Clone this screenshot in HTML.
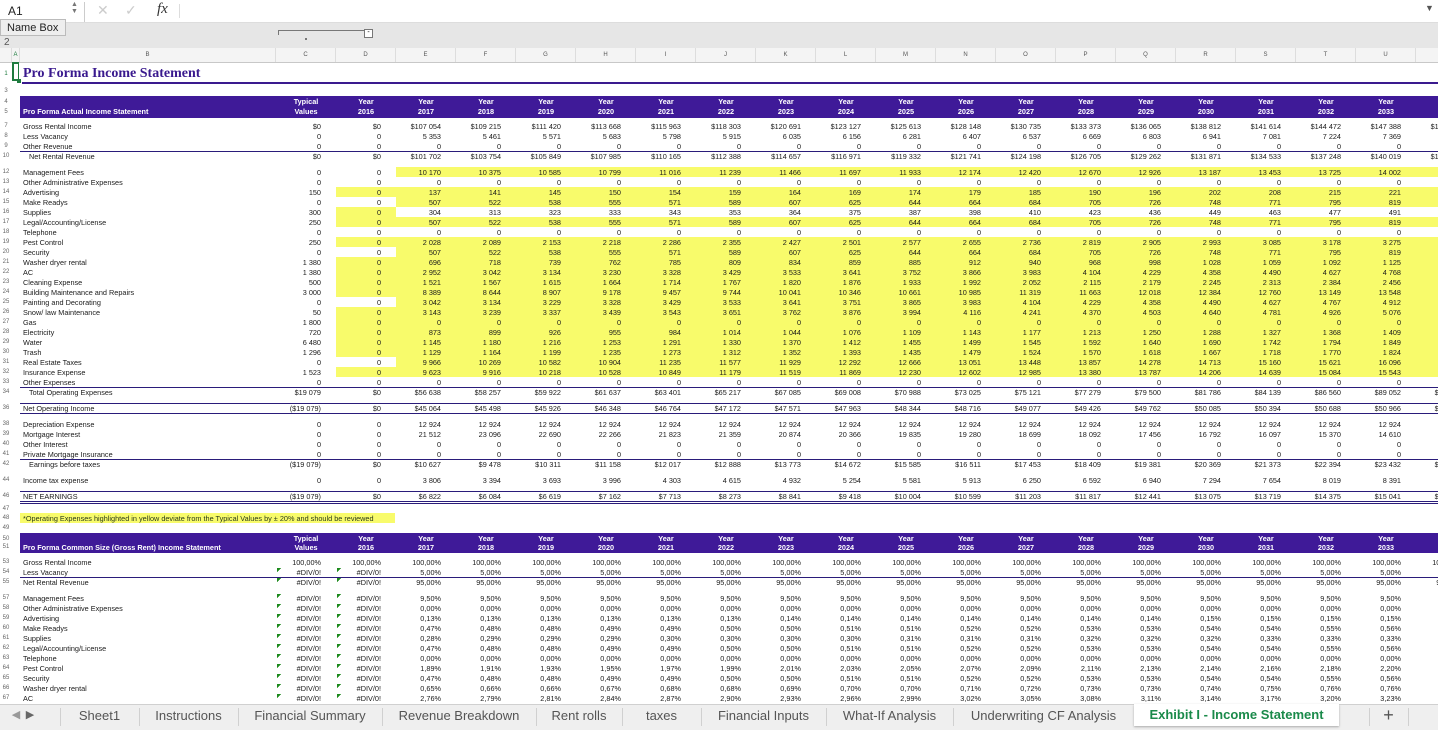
<!DOCTYPE html>
<html><head><meta charset="utf-8"><style>
body{margin:0;width:1438px;height:729px;overflow:hidden;position:relative;font-family:"Liberation Sans",Arial,sans-serif;background:#fff}
.r{position:absolute;left:0;height:10px;line-height:11px;white-space:nowrap;font-size:7.3px;color:#1a1a1a;width:1500px}
.r>*{display:inline-block;vertical-align:top;height:100%;overflow:hidden}
.n{width:12px;text-align:center;font-size:6px;color:#666}
.a{width:8px}
.l{width:256px;padding-left:3px;box-sizing:border-box}
.r i{font-style:normal;width:60px;text-align:right;padding-right:15px;box-sizing:border-box}
.ye i:nth-of-type(n+3){background:#f8fb6b}
.yd i:nth-of-type(2){background:#f8fb6b}
.g i:nth-of-type(1),.g i:nth-of-type(2){background:linear-gradient(135deg,#1d8a1d 3px,transparent 3px) no-repeat 1px 1px}
.pb .l,.pb i{background:#3f1a98;color:#fff;font-weight:bold}
.pb i{text-align:center;padding:0}
.ind{padding-left:9px!important}
.h{position:absolute;left:20px;width:1418px;height:1px;background:#2a1c7a}
.hd{position:absolute;top:48px;left:0;height:14px;width:1500px;background:#f4f4f4;border-bottom:1px solid #c8c8c8;white-space:nowrap;font-size:6px;color:#555;line-height:14px}
.hd span{display:inline-block;text-align:center;border-right:1px solid #ddd;box-sizing:border-box;height:14px;vertical-align:top}
.tabs{position:absolute;top:704px;left:0;width:1438px;height:25px;background:#efefef;border-top:1px solid #d0d0d0;font-size:13px;color:#555}
.tabs span{position:absolute;top:0;height:25px;line-height:21px;text-align:center}
.sep{position:absolute;top:3px;width:1px;height:18px;background:#d0d0d0}
</style></head><body>
<div style="position:absolute;top:0;left:0;width:1438px;height:22px;background:#fff;border-bottom:1px solid #ddd"></div>
<div style="position:absolute;top:4px;left:8px;font-size:12px;color:#222">A1</div>
<div style="position:absolute;top:1px;left:71px;font-size:7px;color:#777;line-height:7px">▲<br>▼</div>
<div style="position:absolute;top:2px;left:84px;width:1px;height:20px;background:#ccc"></div>
<div style="position:absolute;top:2px;left:97px;font-size:14px;color:#ccc">✕</div>
<div style="position:absolute;top:2px;left:125px;font-size:14px;color:#ccc">✓</div>
<div style="position:absolute;top:1px;left:157px;font-size:15px;font-family:'Liberation Serif',serif;font-style:italic;color:#333">fx</div>
<div style="position:absolute;top:4px;left:179px;width:1px;height:14px;background:#ddd"></div>
<div style="position:absolute;top:3px;left:1425px;font-size:9px;color:#555">▼</div>
<div style="position:absolute;top:23px;left:0;width:1438px;height:25px;background:#e6e6e6"></div>
<div style="position:absolute;top:30px;left:278px;width:86px;height:4px;border-top:1px solid #777;border-left:1px solid #777"></div>
<div style="position:absolute;top:29px;left:364px;width:7px;height:7px;border:1px solid #777;background:#fff;font-size:7px;line-height:6px;text-align:center">-</div>
<div style="position:absolute;top:38px;left:305px;width:2px;height:2px;background:#777"></div>
<div style="position:absolute;top:37px;left:4px;font-size:10px;color:#555">2</div>
<div style="position:absolute;top:19px;left:0;height:17px;background:#eee;border:1px solid #bbb;font-size:11px;line-height:17px;padding-left:6px;box-sizing:border-box;width:66px;color:#222">Name Box</div>
<div class="hd"><span style="width:12px"></span><span style="width:8px;color:#1e7b3e">A</span><span style="width:256px">B</span><span style="width:60px">C</span><span style="width:60px">D</span><span style="width:60px">E</span><span style="width:60px">F</span><span style="width:60px">G</span><span style="width:60px">H</span><span style="width:60px">I</span><span style="width:60px">J</span><span style="width:60px">K</span><span style="width:60px">L</span><span style="width:60px">M</span><span style="width:60px">N</span><span style="width:60px">O</span><span style="width:60px">P</span><span style="width:60px">Q</span><span style="width:60px">R</span><span style="width:60px">S</span><span style="width:60px">T</span><span style="width:60px">U</span><span style="width:60px">V</span></div>

<div class="r" style="top:62px;height:18px;line-height:24px"><span class="n" style="color:#1e7b3e">1</span><span class="a"></span><span class="l" style="font-family:'Liberation Serif',serif;font-weight:bold;font-size:14px;color:#3a1a8e;overflow:visible">Pro Forma Income Statement</span></div>
<div style="position:absolute;top:62px;left:12px;width:7px;height:19px;border:2px solid #1e7b3e;border-right-width:1px;box-sizing:border-box"></div>
<div style="position:absolute;top:79px;left:17px;width:4px;height:4px;background:#1e7b3e"></div>
<div style="position:absolute;top:82px;left:22px;width:1416px;height:2px;background:#3a1a8e"></div>
<div class="r" style="top:86px"><span class="n">3</span></div>
<div class="r pb" style="top:96px;height:11px;line-height:12px"><span class="n">4</span><span class="a"></span><span class="l"></span><i>Typical</i><i>Year</i><i>Year</i><i>Year</i><i>Year</i><i>Year</i><i>Year</i><i>Year</i><i>Year</i><i>Year</i><i>Year</i><i>Year</i><i>Year</i><i>Year</i><i>Year</i><i>Year</i><i>Year</i><i>Year</i><i>Year</i><i>Year</i></div>
<div class="r pb" style="top:107px;height:11px;line-height:10px"><span class="n">5</span><span class="a"></span><span class="l">Pro Forma Actual Income Statement</span><i>Values</i><i>2016</i><i>2017</i><i>2018</i><i>2019</i><i>2020</i><i>2021</i><i>2022</i><i>2023</i><i>2024</i><i>2025</i><i>2026</i><i>2027</i><i>2028</i><i>2029</i><i>2030</i><i>2031</i><i>2032</i><i>2033</i><i>2034</i></div>
<div class="r" style="top:121px"><span class="n">7</span><span class="a"></span><span class="l">Gross Rental Income</span><i>$0</i><i>$0</i><i>$107 054</i><i>$109 215</i><i>$111 420</i><i>$113 668</i><i>$115 963</i><i>$118 303</i><i>$120 691</i><i>$123 127</i><i>$125 613</i><i>$128 148</i><i>$130 735</i><i>$133 373</i><i>$136 065</i><i>$138 812</i><i>$141 614</i><i>$144 472</i><i>$147 388</i><i>$150 363</i></div>
<div class="r" style="top:131px"><span class="n">8</span><span class="a"></span><span class="l">Less Vacancy</span><i>0</i><i>0</i><i>5 353</i><i>5 461</i><i>5 571</i><i>5 683</i><i>5 798</i><i>5 915</i><i>6 035</i><i>6 156</i><i>6 281</i><i>6 407</i><i>6 537</i><i>6 669</i><i>6 803</i><i>6 941</i><i>7 081</i><i>7 224</i><i>7 369</i><i>7 518</i></div>
<div class="r" style="top:141px"><span class="n">9</span><span class="a"></span><span class="l">Other Revenue</span><i>0</i><i>0</i><i>0</i><i>0</i><i>0</i><i>0</i><i>0</i><i>0</i><i>0</i><i>0</i><i>0</i><i>0</i><i>0</i><i>0</i><i>0</i><i>0</i><i>0</i><i>0</i><i>0</i><i>0</i></div>
<div class="h" style="top:151px"></div>
<div class="r" style="top:151px"><span class="n">10</span><span class="a"></span><span class="l ind">Net Rental Revenue</span><i>$0</i><i>$0</i><i>$101 702</i><i>$103 754</i><i>$105 849</i><i>$107 985</i><i>$110 165</i><i>$112 388</i><i>$114 657</i><i>$116 971</i><i>$119 332</i><i>$121 741</i><i>$124 198</i><i>$126 705</i><i>$129 262</i><i>$131 871</i><i>$134 533</i><i>$137 248</i><i>$140 019</i><i>$142 845</i></div>
<div class="r ye" style="top:167px"><span class="n">12</span><span class="a"></span><span class="l">Management Fees</span><i>0</i><i>0</i><i>10 170</i><i>10 375</i><i>10 585</i><i>10 799</i><i>11 016</i><i>11 239</i><i>11 466</i><i>11 697</i><i>11 933</i><i>12 174</i><i>12 420</i><i>12 670</i><i>12 926</i><i>13 187</i><i>13 453</i><i>13 725</i><i>14 002</i><i>14 285</i></div>
<div class="r" style="top:177px"><span class="n">13</span><span class="a"></span><span class="l">Other Administrative Expenses</span><i>0</i><i>0</i><i>0</i><i>0</i><i>0</i><i>0</i><i>0</i><i>0</i><i>0</i><i>0</i><i>0</i><i>0</i><i>0</i><i>0</i><i>0</i><i>0</i><i>0</i><i>0</i><i>0</i><i>0</i></div>
<div class="r ye yd" style="top:187px"><span class="n">14</span><span class="a"></span><span class="l">Advertising</span><i>150</i><i>0</i><i>137</i><i>141</i><i>145</i><i>150</i><i>154</i><i>159</i><i>164</i><i>169</i><i>174</i><i>179</i><i>185</i><i>190</i><i>196</i><i>202</i><i>208</i><i>215</i><i>221</i><i>228</i></div>
<div class="r ye" style="top:197px"><span class="n">15</span><span class="a"></span><span class="l">Make Readys</span><i>0</i><i>0</i><i>507</i><i>522</i><i>538</i><i>555</i><i>571</i><i>589</i><i>607</i><i>625</i><i>644</i><i>664</i><i>684</i><i>705</i><i>726</i><i>748</i><i>771</i><i>795</i><i>819</i><i>844</i></div>
<div class="r yd" style="top:207px"><span class="n">16</span><span class="a"></span><span class="l">Supplies</span><i>300</i><i>0</i><i>304</i><i>313</i><i>323</i><i>333</i><i>343</i><i>353</i><i>364</i><i>375</i><i>387</i><i>398</i><i>410</i><i>423</i><i>436</i><i>449</i><i>463</i><i>477</i><i>491</i><i>506</i></div>
<div class="r ye yd" style="top:217px"><span class="n">17</span><span class="a"></span><span class="l">Legal/Accounting/License</span><i>250</i><i>0</i><i>507</i><i>522</i><i>538</i><i>555</i><i>571</i><i>589</i><i>607</i><i>625</i><i>644</i><i>664</i><i>684</i><i>705</i><i>726</i><i>748</i><i>771</i><i>795</i><i>819</i><i>844</i></div>
<div class="r" style="top:227px"><span class="n">18</span><span class="a"></span><span class="l">Telephone</span><i>0</i><i>0</i><i>0</i><i>0</i><i>0</i><i>0</i><i>0</i><i>0</i><i>0</i><i>0</i><i>0</i><i>0</i><i>0</i><i>0</i><i>0</i><i>0</i><i>0</i><i>0</i><i>0</i><i>0</i></div>
<div class="r ye yd" style="top:237px"><span class="n">19</span><span class="a"></span><span class="l">Pest Control</span><i>250</i><i>0</i><i>2 028</i><i>2 089</i><i>2 153</i><i>2 218</i><i>2 286</i><i>2 355</i><i>2 427</i><i>2 501</i><i>2 577</i><i>2 655</i><i>2 736</i><i>2 819</i><i>2 905</i><i>2 993</i><i>3 085</i><i>3 178</i><i>3 275</i><i>3 374</i></div>
<div class="r ye" style="top:247px"><span class="n">20</span><span class="a"></span><span class="l">Security</span><i>0</i><i>0</i><i>507</i><i>522</i><i>538</i><i>555</i><i>571</i><i>589</i><i>607</i><i>625</i><i>644</i><i>664</i><i>684</i><i>705</i><i>726</i><i>748</i><i>771</i><i>795</i><i>819</i><i>844</i></div>
<div class="r ye yd" style="top:257px"><span class="n">21</span><span class="a"></span><span class="l">Washer dryer rental</span><i>1 380</i><i>0</i><i>696</i><i>718</i><i>739</i><i>762</i><i>785</i><i>809</i><i>834</i><i>859</i><i>885</i><i>912</i><i>940</i><i>968</i><i>998</i><i>1 028</i><i>1 059</i><i>1 092</i><i>1 125</i><i>1 159</i></div>
<div class="r ye yd" style="top:267px"><span class="n">22</span><span class="a"></span><span class="l">AC</span><i>1 380</i><i>0</i><i>2 952</i><i>3 042</i><i>3 134</i><i>3 230</i><i>3 328</i><i>3 429</i><i>3 533</i><i>3 641</i><i>3 752</i><i>3 866</i><i>3 983</i><i>4 104</i><i>4 229</i><i>4 358</i><i>4 490</i><i>4 627</i><i>4 768</i><i>4 913</i></div>
<div class="r ye yd" style="top:277px"><span class="n">23</span><span class="a"></span><span class="l">Cleaning Expense</span><i>500</i><i>0</i><i>1 521</i><i>1 567</i><i>1 615</i><i>1 664</i><i>1 714</i><i>1 767</i><i>1 820</i><i>1 876</i><i>1 933</i><i>1 992</i><i>2 052</i><i>2 115</i><i>2 179</i><i>2 245</i><i>2 313</i><i>2 384</i><i>2 456</i><i>2 531</i></div>
<div class="r ye yd" style="top:287px"><span class="n">24</span><span class="a"></span><span class="l">Building Maintenance and Repairs</span><i>3 000</i><i>0</i><i>8 389</i><i>8 644</i><i>8 907</i><i>9 178</i><i>9 457</i><i>9 744</i><i>10 041</i><i>10 346</i><i>10 661</i><i>10 985</i><i>11 319</i><i>11 663</i><i>12 018</i><i>12 384</i><i>12 760</i><i>13 149</i><i>13 548</i><i>13 961</i></div>
<div class="r ye" style="top:297px"><span class="n">25</span><span class="a"></span><span class="l">Painting and Decorating</span><i>0</i><i>0</i><i>3 042</i><i>3 134</i><i>3 229</i><i>3 328</i><i>3 429</i><i>3 533</i><i>3 641</i><i>3 751</i><i>3 865</i><i>3 983</i><i>4 104</i><i>4 229</i><i>4 358</i><i>4 490</i><i>4 627</i><i>4 767</i><i>4 912</i><i>5 062</i></div>
<div class="r ye yd" style="top:307px"><span class="n">26</span><span class="a"></span><span class="l">Snow/ law Maintenance</span><i>50</i><i>0</i><i>3 143</i><i>3 239</i><i>3 337</i><i>3 439</i><i>3 543</i><i>3 651</i><i>3 762</i><i>3 876</i><i>3 994</i><i>4 116</i><i>4 241</i><i>4 370</i><i>4 503</i><i>4 640</i><i>4 781</i><i>4 926</i><i>5 076</i><i>5 230</i></div>
<div class="r ye yd" style="top:317px"><span class="n">27</span><span class="a"></span><span class="l">Gas</span><i>1 800</i><i>0</i><i>0</i><i>0</i><i>0</i><i>0</i><i>0</i><i>0</i><i>0</i><i>0</i><i>0</i><i>0</i><i>0</i><i>0</i><i>0</i><i>0</i><i>0</i><i>0</i><i>0</i><i>0</i></div>
<div class="r ye yd" style="top:327px"><span class="n">28</span><span class="a"></span><span class="l">Electricity</span><i>720</i><i>0</i><i>873</i><i>899</i><i>926</i><i>955</i><i>984</i><i>1 014</i><i>1 044</i><i>1 076</i><i>1 109</i><i>1 143</i><i>1 177</i><i>1 213</i><i>1 250</i><i>1 288</i><i>1 327</i><i>1 368</i><i>1 409</i><i>1 452</i></div>
<div class="r ye yd" style="top:337px"><span class="n">29</span><span class="a"></span><span class="l">Water</span><i>6 480</i><i>0</i><i>1 145</i><i>1 180</i><i>1 216</i><i>1 253</i><i>1 291</i><i>1 330</i><i>1 370</i><i>1 412</i><i>1 455</i><i>1 499</i><i>1 545</i><i>1 592</i><i>1 640</i><i>1 690</i><i>1 742</i><i>1 794</i><i>1 849</i><i>1 905</i></div>
<div class="r ye yd" style="top:347px"><span class="n">30</span><span class="a"></span><span class="l">Trash</span><i>1 296</i><i>0</i><i>1 129</i><i>1 164</i><i>1 199</i><i>1 235</i><i>1 273</i><i>1 312</i><i>1 352</i><i>1 393</i><i>1 435</i><i>1 479</i><i>1 524</i><i>1 570</i><i>1 618</i><i>1 667</i><i>1 718</i><i>1 770</i><i>1 824</i><i>1 880</i></div>
<div class="r ye" style="top:357px"><span class="n">31</span><span class="a"></span><span class="l">Real Estate Taxes</span><i>0</i><i>0</i><i>9 966</i><i>10 269</i><i>10 582</i><i>10 904</i><i>11 235</i><i>11 577</i><i>11 929</i><i>12 292</i><i>12 666</i><i>13 051</i><i>13 448</i><i>13 857</i><i>14 278</i><i>14 713</i><i>15 160</i><i>15 621</i><i>16 096</i><i>16 586</i></div>
<div class="r ye yd" style="top:367px"><span class="n">32</span><span class="a"></span><span class="l">Insurance Expense</span><i>1 523</i><i>0</i><i>9 623</i><i>9 916</i><i>10 218</i><i>10 528</i><i>10 849</i><i>11 179</i><i>11 519</i><i>11 869</i><i>12 230</i><i>12 602</i><i>12 985</i><i>13 380</i><i>13 787</i><i>14 206</i><i>14 639</i><i>15 084</i><i>15 543</i><i>16 016</i></div>
<div class="r" style="top:377px"><span class="n">33</span><span class="a"></span><span class="l">Other Expenses</span><i>0</i><i>0</i><i>0</i><i>0</i><i>0</i><i>0</i><i>0</i><i>0</i><i>0</i><i>0</i><i>0</i><i>0</i><i>0</i><i>0</i><i>0</i><i>0</i><i>0</i><i>0</i><i>0</i><i>0</i></div>
<div class="h" style="top:387px"></div>
<div class="r" style="top:387px"><span class="n">34</span><span class="a"></span><span class="l ind">Total Operating Expenses</span><i>$19 079</i><i>$0</i><i>$56 638</i><i>$58 257</i><i>$59 922</i><i>$61 637</i><i>$63 401</i><i>$65 217</i><i>$67 085</i><i>$69 008</i><i>$70 988</i><i>$73 025</i><i>$75 121</i><i>$77 279</i><i>$79 500</i><i>$81 786</i><i>$84 139</i><i>$86 560</i><i>$89 052</i><i>$91 617</i></div>
<div class="h" style="top:403px"></div>
<div class="r" style="top:403px"><span class="n">36</span><span class="a"></span><span class="l">Net Operating Income</span><i>($19 079)</i><i>$0</i><i>$45 064</i><i>$45 498</i><i>$45 926</i><i>$46 348</i><i>$46 764</i><i>$47 172</i><i>$47 571</i><i>$47 963</i><i>$48 344</i><i>$48 716</i><i>$49 077</i><i>$49 426</i><i>$49 762</i><i>$50 085</i><i>$50 394</i><i>$50 688</i><i>$50 966</i><i>$51 228</i></div>
<div class="h" style="top:413px"></div>
<div class="r" style="top:419px"><span class="n">38</span><span class="a"></span><span class="l">Depreciation Expense</span><i>0</i><i>0</i><i>12 924</i><i>12 924</i><i>12 924</i><i>12 924</i><i>12 924</i><i>12 924</i><i>12 924</i><i>12 924</i><i>12 924</i><i>12 924</i><i>12 924</i><i>12 924</i><i>12 924</i><i>12 924</i><i>12 924</i><i>12 924</i><i>12 924</i><i>12 924</i></div>
<div class="r" style="top:429px"><span class="n">39</span><span class="a"></span><span class="l">Mortgage Interest</span><i>0</i><i>0</i><i>21 512</i><i>23 096</i><i>22 690</i><i>22 266</i><i>21 823</i><i>21 359</i><i>20 874</i><i>20 366</i><i>19 835</i><i>19 280</i><i>18 699</i><i>18 092</i><i>17 456</i><i>16 792</i><i>16 097</i><i>15 370</i><i>14 610</i><i>13 815</i></div>
<div class="r" style="top:439px"><span class="n">40</span><span class="a"></span><span class="l">Other Interest</span><i>0</i><i>0</i><i>0</i><i>0</i><i>0</i><i>0</i><i>0</i><i>0</i><i>0</i><i>0</i><i>0</i><i>0</i><i>0</i><i>0</i><i>0</i><i>0</i><i>0</i><i>0</i><i>0</i><i>0</i></div>
<div class="r" style="top:449px"><span class="n">41</span><span class="a"></span><span class="l">Private Mortgage Insurance</span><i>0</i><i>0</i><i>0</i><i>0</i><i>0</i><i>0</i><i>0</i><i>0</i><i>0</i><i>0</i><i>0</i><i>0</i><i>0</i><i>0</i><i>0</i><i>0</i><i>0</i><i>0</i><i>0</i><i>0</i></div>
<div class="h" style="top:459px"></div>
<div class="r" style="top:459px"><span class="n">42</span><span class="a"></span><span class="l ind">Earnings before taxes</span><i>($19 079)</i><i>$0</i><i>$10 627</i><i>$9 478</i><i>$10 311</i><i>$11 158</i><i>$12 017</i><i>$12 888</i><i>$13 773</i><i>$14 672</i><i>$15 585</i><i>$16 511</i><i>$17 453</i><i>$18 409</i><i>$19 381</i><i>$20 369</i><i>$21 373</i><i>$22 394</i><i>$23 432</i><i>$24 489</i></div>
<div class="r" style="top:475px"><span class="n">44</span><span class="a"></span><span class="l">Income tax expense</span><i>0</i><i>0</i><i>3 806</i><i>3 394</i><i>3 693</i><i>3 996</i><i>4 303</i><i>4 615</i><i>4 932</i><i>5 254</i><i>5 581</i><i>5 913</i><i>6 250</i><i>6 592</i><i>6 940</i><i>7 294</i><i>7 654</i><i>8 019</i><i>8 391</i><i>8 770</i></div>
<div class="h" style="top:491px"></div>
<div class="r" style="top:491px"><span class="n">46</span><span class="a"></span><span class="l">NET EARNINGS</span><i>($19 079)</i><i>$0</i><i>$6 822</i><i>$6 084</i><i>$6 619</i><i>$7 162</i><i>$7 713</i><i>$8 273</i><i>$8 841</i><i>$9 418</i><i>$10 004</i><i>$10 599</i><i>$11 203</i><i>$11 817</i><i>$12 441</i><i>$13 075</i><i>$13 719</i><i>$14 375</i><i>$15 041</i><i>$15 719</i></div>
<div class="h" style="top:501px"></div><div class="h" style="top:503px"></div>
<div class="r" style="top:504px"><span class="n">47</span></div>
<div class="r" style="top:513px"><span class="n">48</span><span class="a"></span><span style="width:375px;background:#f8fb6b;padding-left:3px;box-sizing:border-box;color:#2a3a1a">*Operating Expenses highlighted in yellow deviate from the Typical Values by ± 20% and should be reviewed</span></div>
<div class="r" style="top:523px"><span class="n">49</span></div>
<div class="r pb" style="top:533px;height:10px;line-height:12px"><span class="n">50</span><span class="a"></span><span class="l"></span><i>Typical</i><i>Year</i><i>Year</i><i>Year</i><i>Year</i><i>Year</i><i>Year</i><i>Year</i><i>Year</i><i>Year</i><i>Year</i><i>Year</i><i>Year</i><i>Year</i><i>Year</i><i>Year</i><i>Year</i><i>Year</i><i>Year</i><i>Year</i></div>
<div class="r pb" style="top:543px;height:10px;line-height:9px"><span class="n">51</span><span class="a"></span><span class="l">Pro Forma Common Size (Gross Rent) Income Statement</span><i>Values</i><i>2016</i><i>2017</i><i>2018</i><i>2019</i><i>2020</i><i>2021</i><i>2022</i><i>2023</i><i>2024</i><i>2025</i><i>2026</i><i>2027</i><i>2028</i><i>2029</i><i>2030</i><i>2031</i><i>2032</i><i>2033</i><i>2034</i></div>
<div class="r" style="top:557px"><span class="n">53</span><span class="a"></span><span class="l">Gross Rental Income</span><i>100,00%</i><i>100,00%</i><i>100,00%</i><i>100,00%</i><i>100,00%</i><i>100,00%</i><i>100,00%</i><i>100,00%</i><i>100,00%</i><i>100,00%</i><i>100,00%</i><i>100,00%</i><i>100,00%</i><i>100,00%</i><i>100,00%</i><i>100,00%</i><i>100,00%</i><i>100,00%</i><i>100,00%</i><i>100,00%</i></div>
<div class="r g" style="top:567px"><span class="n">54</span><span class="a"></span><span class="l">Less Vacancy</span><i>#DIV/0!</i><i>#DIV/0!</i><i>5,00%</i><i>5,00%</i><i>5,00%</i><i>5,00%</i><i>5,00%</i><i>5,00%</i><i>5,00%</i><i>5,00%</i><i>5,00%</i><i>5,00%</i><i>5,00%</i><i>5,00%</i><i>5,00%</i><i>5,00%</i><i>5,00%</i><i>5,00%</i><i>5,00%</i><i>5,00%</i></div>
<div class="h" style="top:577px"></div>
<div class="r g" style="top:577px"><span class="n">55</span><span class="a"></span><span class="l">Net Rental Revenue</span><i>#DIV/0!</i><i>#DIV/0!</i><i>95,00%</i><i>95,00%</i><i>95,00%</i><i>95,00%</i><i>95,00%</i><i>95,00%</i><i>95,00%</i><i>95,00%</i><i>95,00%</i><i>95,00%</i><i>95,00%</i><i>95,00%</i><i>95,00%</i><i>95,00%</i><i>95,00%</i><i>95,00%</i><i>95,00%</i><i>95,00%</i></div>
<div class="r g" style="top:593px"><span class="n">57</span><span class="a"></span><span class="l">Management Fees</span><i>#DIV/0!</i><i>#DIV/0!</i><i>9,50%</i><i>9,50%</i><i>9,50%</i><i>9,50%</i><i>9,50%</i><i>9,50%</i><i>9,50%</i><i>9,50%</i><i>9,50%</i><i>9,50%</i><i>9,50%</i><i>9,50%</i><i>9,50%</i><i>9,50%</i><i>9,50%</i><i>9,50%</i><i>9,50%</i><i>9,50%</i></div>
<div class="r g" style="top:603px"><span class="n">58</span><span class="a"></span><span class="l">Other Administrative Expenses</span><i>#DIV/0!</i><i>#DIV/0!</i><i>0,00%</i><i>0,00%</i><i>0,00%</i><i>0,00%</i><i>0,00%</i><i>0,00%</i><i>0,00%</i><i>0,00%</i><i>0,00%</i><i>0,00%</i><i>0,00%</i><i>0,00%</i><i>0,00%</i><i>0,00%</i><i>0,00%</i><i>0,00%</i><i>0,00%</i><i>0,00%</i></div>
<div class="r g" style="top:613px"><span class="n">59</span><span class="a"></span><span class="l">Advertising</span><i>#DIV/0!</i><i>#DIV/0!</i><i>0,13%</i><i>0,13%</i><i>0,13%</i><i>0,13%</i><i>0,13%</i><i>0,13%</i><i>0,14%</i><i>0,14%</i><i>0,14%</i><i>0,14%</i><i>0,14%</i><i>0,14%</i><i>0,14%</i><i>0,15%</i><i>0,15%</i><i>0,15%</i><i>0,15%</i><i>0,15%</i></div>
<div class="r g" style="top:623px"><span class="n">60</span><span class="a"></span><span class="l">Make Readys</span><i>#DIV/0!</i><i>#DIV/0!</i><i>0,47%</i><i>0,48%</i><i>0,48%</i><i>0,49%</i><i>0,49%</i><i>0,50%</i><i>0,50%</i><i>0,51%</i><i>0,51%</i><i>0,52%</i><i>0,52%</i><i>0,53%</i><i>0,53%</i><i>0,54%</i><i>0,54%</i><i>0,55%</i><i>0,56%</i><i>0,56%</i></div>
<div class="r g" style="top:633px"><span class="n">61</span><span class="a"></span><span class="l">Supplies</span><i>#DIV/0!</i><i>#DIV/0!</i><i>0,28%</i><i>0,29%</i><i>0,29%</i><i>0,29%</i><i>0,30%</i><i>0,30%</i><i>0,30%</i><i>0,30%</i><i>0,31%</i><i>0,31%</i><i>0,31%</i><i>0,32%</i><i>0,32%</i><i>0,32%</i><i>0,33%</i><i>0,33%</i><i>0,33%</i><i>0,34%</i></div>
<div class="r g" style="top:643px"><span class="n">62</span><span class="a"></span><span class="l">Legal/Accounting/License</span><i>#DIV/0!</i><i>#DIV/0!</i><i>0,47%</i><i>0,48%</i><i>0,48%</i><i>0,49%</i><i>0,49%</i><i>0,50%</i><i>0,50%</i><i>0,51%</i><i>0,51%</i><i>0,52%</i><i>0,52%</i><i>0,53%</i><i>0,53%</i><i>0,54%</i><i>0,54%</i><i>0,55%</i><i>0,56%</i><i>0,56%</i></div>
<div class="r g" style="top:653px"><span class="n">63</span><span class="a"></span><span class="l">Telephone</span><i>#DIV/0!</i><i>#DIV/0!</i><i>0,00%</i><i>0,00%</i><i>0,00%</i><i>0,00%</i><i>0,00%</i><i>0,00%</i><i>0,00%</i><i>0,00%</i><i>0,00%</i><i>0,00%</i><i>0,00%</i><i>0,00%</i><i>0,00%</i><i>0,00%</i><i>0,00%</i><i>0,00%</i><i>0,00%</i><i>0,00%</i></div>
<div class="r g" style="top:663px"><span class="n">64</span><span class="a"></span><span class="l">Pest Control</span><i>#DIV/0!</i><i>#DIV/0!</i><i>1,89%</i><i>1,91%</i><i>1,93%</i><i>1,95%</i><i>1,97%</i><i>1,99%</i><i>2,01%</i><i>2,03%</i><i>2,05%</i><i>2,07%</i><i>2,09%</i><i>2,11%</i><i>2,13%</i><i>2,14%</i><i>2,16%</i><i>2,18%</i><i>2,20%</i><i>2,22%</i></div>
<div class="r g" style="top:673px"><span class="n">65</span><span class="a"></span><span class="l">Security</span><i>#DIV/0!</i><i>#DIV/0!</i><i>0,47%</i><i>0,48%</i><i>0,48%</i><i>0,49%</i><i>0,49%</i><i>0,50%</i><i>0,50%</i><i>0,51%</i><i>0,51%</i><i>0,52%</i><i>0,52%</i><i>0,53%</i><i>0,53%</i><i>0,54%</i><i>0,54%</i><i>0,55%</i><i>0,56%</i><i>0,56%</i></div>
<div class="r g" style="top:683px"><span class="n">66</span><span class="a"></span><span class="l">Washer dryer rental</span><i>#DIV/0!</i><i>#DIV/0!</i><i>0,65%</i><i>0,66%</i><i>0,66%</i><i>0,67%</i><i>0,68%</i><i>0,68%</i><i>0,69%</i><i>0,70%</i><i>0,70%</i><i>0,71%</i><i>0,72%</i><i>0,73%</i><i>0,73%</i><i>0,74%</i><i>0,75%</i><i>0,76%</i><i>0,76%</i><i>0,77%</i></div>
<div class="r g" style="top:693px"><span class="n">67</span><span class="a"></span><span class="l">AC</span><i>#DIV/0!</i><i>#DIV/0!</i><i>2,76%</i><i>2,79%</i><i>2,81%</i><i>2,84%</i><i>2,87%</i><i>2,90%</i><i>2,93%</i><i>2,96%</i><i>2,99%</i><i>3,02%</i><i>3,05%</i><i>3,08%</i><i>3,11%</i><i>3,14%</i><i>3,17%</i><i>3,20%</i><i>3,23%</i><i>3,26%</i></div>

<div class="tabs">
<span style="left:10px;width:12px;color:#999;font-size:11px">◀</span><span style="left:24px;width:12px;color:#666;font-size:11px">▶</span>
<div class="sep" style="left:60px"></div>
<span style="left:60px;width:79px">Sheet1</span><div class="sep" style="left:139px"></div>
<span style="left:139px;width:99px">Instructions</span><div class="sep" style="left:238px"></div>
<span style="left:238px;width:144px">Financial Summary</span><div class="sep" style="left:382px"></div>
<span style="left:382px;width:154px">Revenue Breakdown</span><div class="sep" style="left:536px"></div>
<span style="left:536px;width:86px">Rent rolls</span><div class="sep" style="left:622px"></div>
<span style="left:622px;width:79px">taxes</span><div class="sep" style="left:701px"></div>
<span style="left:701px;width:125px">Financial Inputs</span><div class="sep" style="left:826px"></div>
<span style="left:826px;width:127px">What-If Analysis</span><div class="sep" style="left:953px"></div>
<span style="left:953px;width:181px">Underwriting CF Analysis</span>
<span style="left:1134px;width:205px;top:-1px;height:22px;background:#fff;color:#1a8a4a;font-weight:bold;box-shadow:0 1px 2px #aaa">Exhibit I - Income Statement</span>
<div class="sep" style="left:1369px"></div>
<span style="left:1369px;width:39px;font-size:18px;color:#555">+</span><div class="sep" style="left:1408px"></div>
</div>
</body></html>
